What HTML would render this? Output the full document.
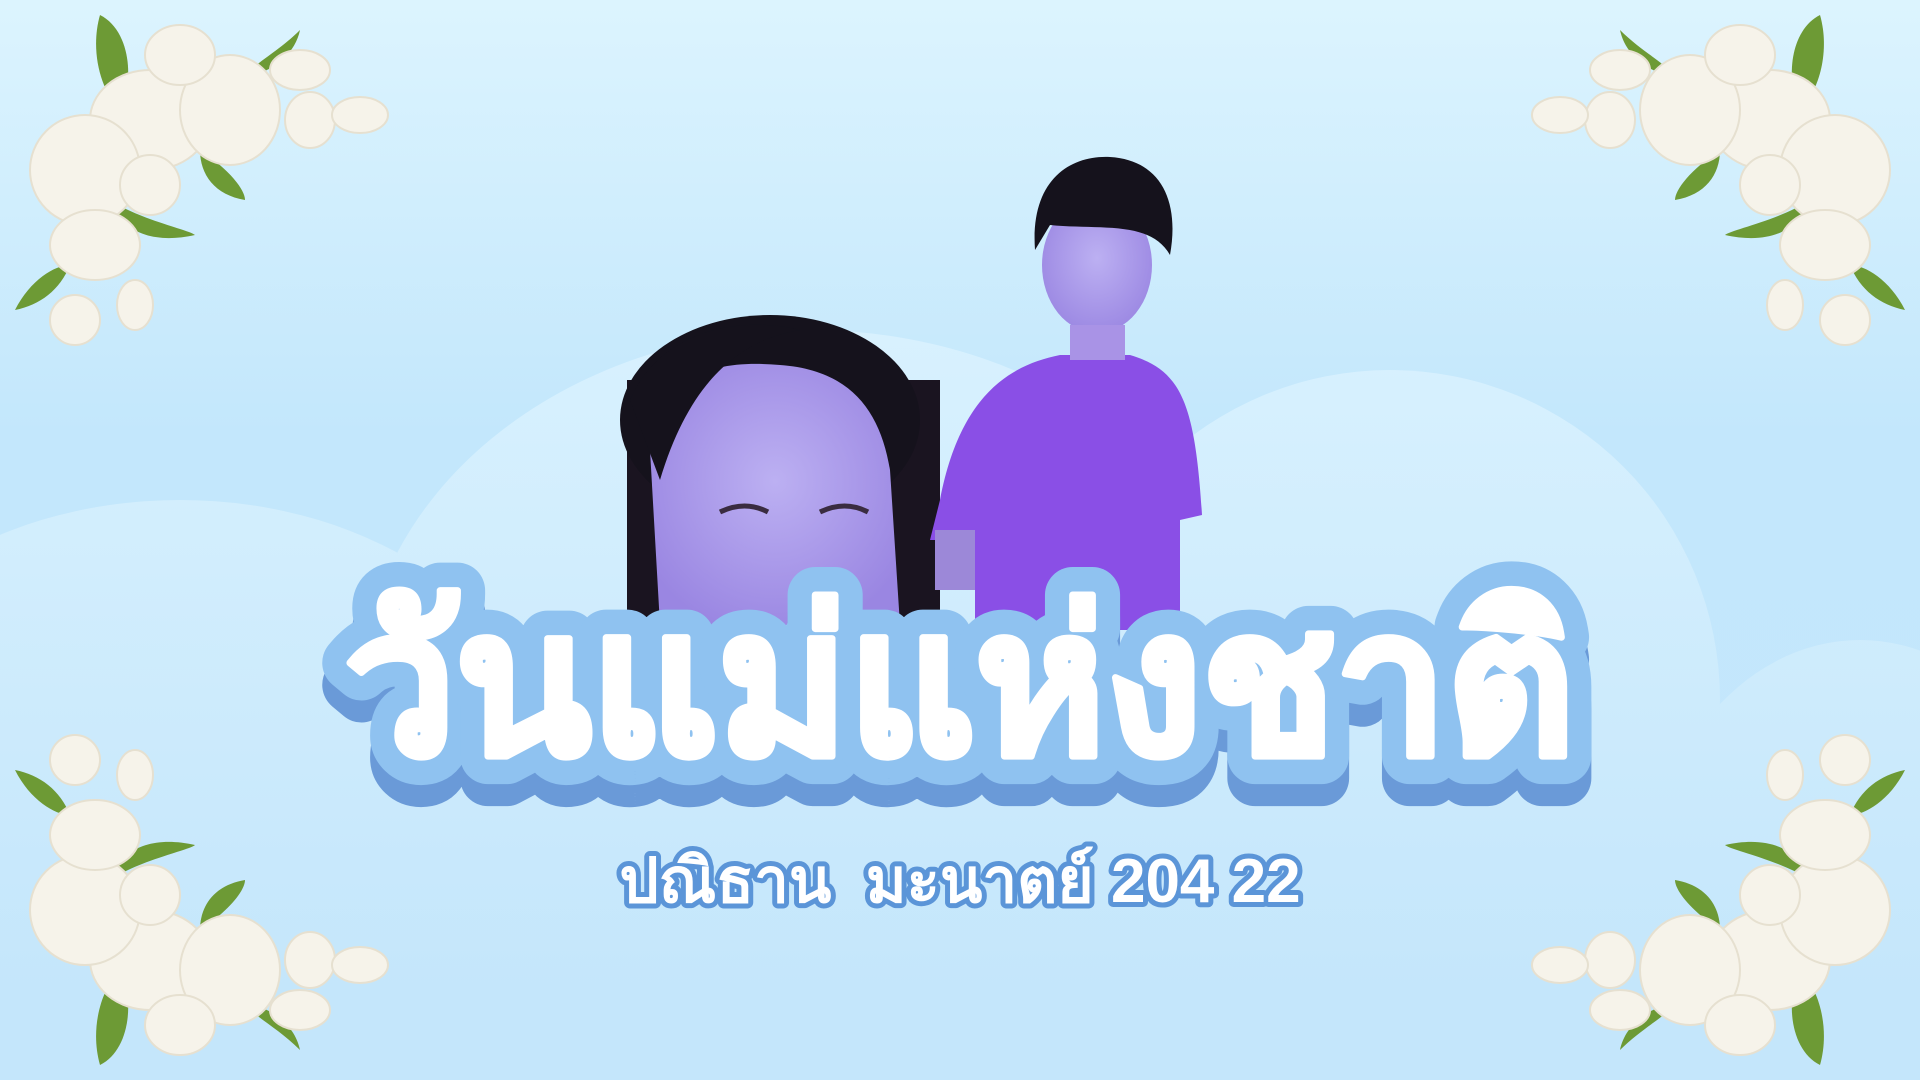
<!DOCTYPE html>
<html><head><meta charset="utf-8"><style>
html,body{margin:0;padding:0;overflow:hidden;width:1920px;height:1080px}
body{position:relative;background:linear-gradient(#dcf4fe,#c3e7fc 40%,#c4e6fb);font-family:"Liberation Sans","Noto Sans CJK SC",sans-serif}
svg{position:absolute;left:0;top:0;display:block}
</style></head><body>
<svg width="1920" height="1080">
<defs>
<g id="fl">
 <path d="M100 15 C130 30 135 80 120 110 C100 90 90 50 100 15Z" fill="#6d9a35"/>
 <path d="M300 30 C280 50 260 60 245 75 C270 75 295 55 300 30Z" fill="#6d9a35"/>
 <path d="M200 150 C230 170 245 190 245 200 C215 195 200 175 200 150Z" fill="#6d9a35"/>
 <path d="M110 200 C140 220 190 230 195 235 C150 245 120 230 110 200Z" fill="#6d9a35"/>
 <path d="M15 310 C30 280 55 265 70 265 C60 290 40 305 15 310Z" fill="#6d9a35"/>
 <g fill="#f6f3ea" stroke="#e6e0d0" stroke-width="2">
 <ellipse cx="150" cy="120" rx="60" ry="50"/>
 <ellipse cx="85" cy="170" rx="55" ry="55"/>
 <ellipse cx="230" cy="110" rx="50" ry="55"/>
 <ellipse cx="180" cy="55" rx="35" ry="30"/>
 <ellipse cx="300" cy="70" rx="30" ry="20"/>
 <ellipse cx="310" cy="120" rx="25" ry="28"/>
 <ellipse cx="360" cy="115" rx="28" ry="18"/>
 <ellipse cx="150" cy="185" rx="30" ry="30"/>
 <ellipse cx="95" cy="245" rx="45" ry="35"/>
 <ellipse cx="75" cy="320" rx="25" ry="25"/>
 <ellipse cx="135" cy="305" rx="18" ry="25"/>
 </g>
</g>
<radialGradient id="sk" cx=".5" cy=".45" r=".6"><stop offset="0" stop-color="#bcb0f2"/><stop offset="1" stop-color="#9a86e2"/></radialGradient>
<linearGradient id="cl" gradientUnits="userSpaceOnUse" x1="0" y1="330" x2="0" y2="1000"><stop offset="0" stop-color="#d8f1fe"/><stop offset="1" stop-color="#c4e6fb"/></linearGradient>
</defs>
<g fill="url(#cl)">
 <ellipse cx="180" cy="760" rx="360" ry="260"/>
 <ellipse cx="810" cy="700" rx="450" ry="370"/>
 <ellipse cx="1390" cy="700" rx="330" ry="330"/>
 <ellipse cx="1860" cy="920" rx="220" ry="280"/>
 <rect x="0" y="760" width="1920" height="320"/>
</g>
<g>
 <rect x="627" y="380" width="313" height="245" fill="#1a1420"/>
 <ellipse cx="770" cy="420" rx="150" ry="105" fill="#15121c"/>
 <path d="M650 450 C660 370 720 360 780 365 C850 370 880 410 890 470 L900 625 L660 625 Z" fill="url(#sk)"/>
 <path d="M720 512 q25 -12 48 0" stroke="#3a2c40" stroke-width="5" fill="none"/>
 <path d="M820 512 q25 -12 48 0" stroke="#3a2c40" stroke-width="5" fill="none"/>
 <path d="M630 400 C660 330 740 315 800 330 C740 340 690 380 660 480 Z" fill="#15121c"/>
</g>
<g>
 <path d="M940 500 C960 395 1010 365 1060 355 L1130 355 C1180 370 1195 400 1202 515 L1180 520 L1180 630 L975 630 L975 540 L930 540 Z" fill="#8a4fe6"/>
 <rect x="935" y="530" width="40" height="60" fill="#9c88d8"/>
 <ellipse cx="1097" cy="265" rx="55" ry="68" fill="url(#sk)"/>
 <path d="M1035 250 C1030 180 1070 155 1110 157 C1160 160 1180 200 1170 255 C1150 220 1100 230 1050 225 Z" fill="#15121c"/>
 <rect x="1070" y="325" width="55" height="35" fill="#a993e6"/>
</g>
<use href="#fl"/>
<use href="#fl" transform="translate(1920,0) scale(-1,1)"/>
<use href="#fl" transform="translate(0,1080) scale(1,-1)"/>
<use href="#fl" transform="translate(1920,1080) scale(-1,-1)"/>
<g font-family="Liberation Sans, Noto Sans CJK SC, sans-serif" font-weight="bold" text-anchor="middle" stroke-linejoin="round" stroke-linecap="round">
 <text x="960" y="775" font-size="200" fill="#6a9ad8" stroke="#6a9ad8" stroke-width="56" textLength="1230" lengthAdjust="spacingAndGlyphs">วันแม่แห่งชาติ</text>
 <text x="960" y="753" font-size="200" fill="#8fc2f0" stroke="#8fc2f0" stroke-width="56" textLength="1230" lengthAdjust="spacingAndGlyphs">วันแม่แห่งชาติ</text>
 <text x="960" y="753" font-size="200" fill="#fff" stroke="#fff" stroke-width="7" textLength="1230" lengthAdjust="spacingAndGlyphs">วันแม่แห่งชาติ</text>
 <text x="960" y="902" font-size="62" fill="#fff" stroke="#5b95d8" stroke-width="10" paint-order="stroke fill" xml:space="preserve">ปณิธาน  มะนาตย์ 204 22</text>
</g>
</svg>
</body></html>
